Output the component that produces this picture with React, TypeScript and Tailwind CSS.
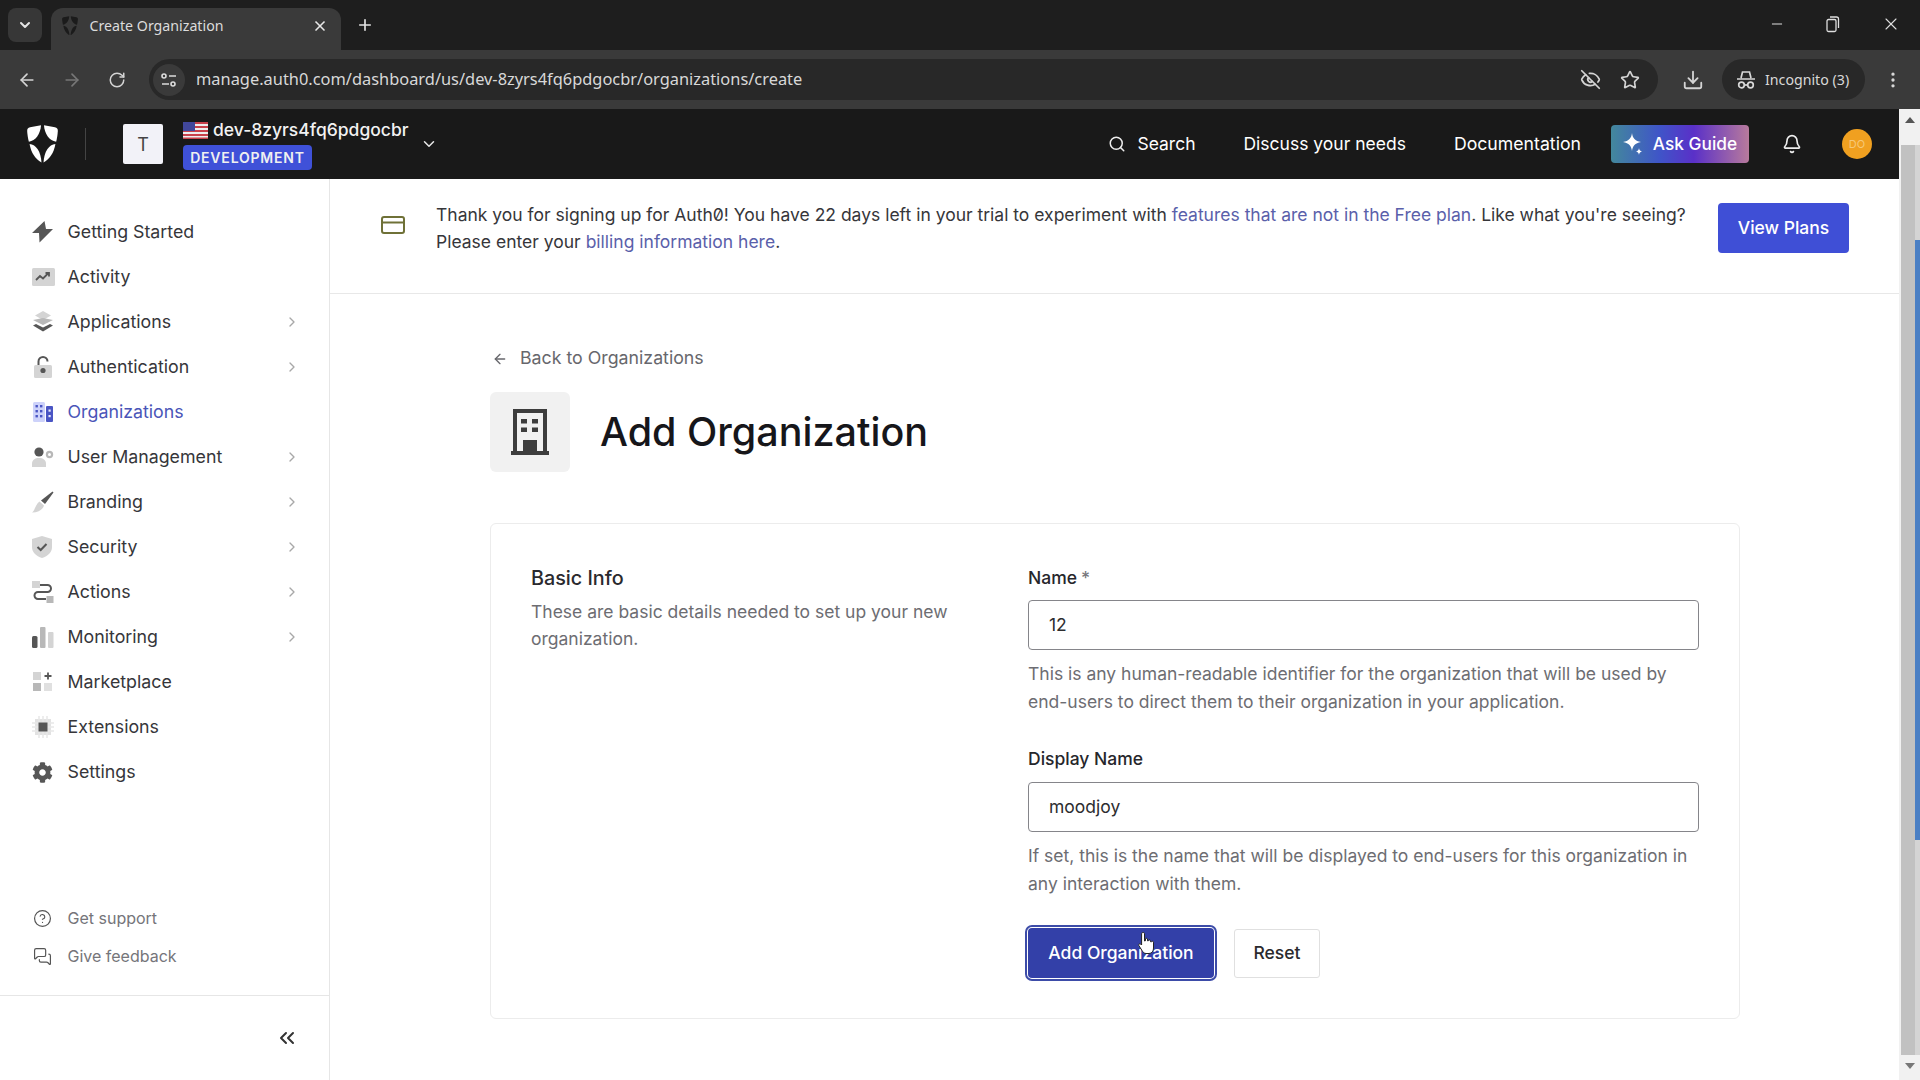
import { ArrowLeft, ArrowRight, RotateCw, Star, EyeOff, Download, MoreVertical, Minus, X, Plus, ChevronDown, ChevronRight, ChevronsLeft, Search, Bell, HelpCircle, MessagesSquare } from "lucide-react";
import { FaCog } from "react-icons/fa";

const D = "#565656";
const L = "#d4d4d4";
const M = "#b8b8b8";

function Bolt() {
  return <svg width="22" height="22" viewBox="0 0 22 22"><polygon points="12.5,0 0,12 7,12 7.5,21.5 21,8 14,8" fill={D} /></svg>;
}
function Activity() {
  return <svg width="23" height="20" viewBox="0 0 23 20"><rect x="0" y="1" width="23" height="18" rx="1.5" fill={L} /><path d="M4 13l4-4 3 2.5 5-5M13.5 6H17v3.5" stroke={D} strokeWidth="1.8" fill="none" /></svg>;
}
function Layers() {
  return <svg width="22" height="22" viewBox="0 0 22 22"><path d="M11 0l8 4.5-8 4.5-8-4.5z" fill={L} /><path d="M1 9l10-2 10 2-10 5z" fill={M} /><path d="M1 14.5l3-1.5 7 3.5 7-3.5 3 1.5-10 6z" fill={D} /></svg>;
}
function Lock() {
  return <svg width="22" height="22" viewBox="0 0 22 22"><rect x="2" y="9" width="18" height="13" rx="1.5" fill={L} /><path d="M6.5 9V5.5a4.5 4.5 0 0 1 9 0" stroke={D} strokeWidth="2" fill="none" /><circle cx="11" cy="14.5" r="2.6" fill={D} /></svg>;
}
function Org() {
  return <svg width="22" height="22" viewBox="0 0 22 22"><rect x="1" y="1" width="12" height="20" rx="1.5" fill="#cdd2fa" /><rect x="14" y="5" width="7" height="16" rx="1" fill="#4a55c4" /><g fill="#4a55c4"><rect x="3.5" y="4" width="2.4" height="2.4" /><rect x="8" y="4" width="2.4" height="2.4" /><rect x="3.5" y="9" width="2.4" height="2.4" /><rect x="8" y="9" width="2.4" height="2.4" /><rect x="3.5" y="14" width="2.4" height="2.4" /><rect x="8" y="14" width="2.4" height="2.4" /></g><g fill="#e8eafc"><rect x="16.5" y="8.5" width="2.2" height="2.2" /><rect x="16.5" y="14" width="2.2" height="2.2" /></g></svg>;
}
function Users() {
  return <svg width="22" height="20" viewBox="0 0 22 20"><circle cx="7" cy="5" r="4.6" fill={D} /><path d="M0 20v-3.5C0 13 3 11 7 11s7 2 7 5.500V20z" fill={L} /><circle cx="17.500" cy="7.500" r="2.600" fill="none" stroke={M} strokeWidth="2.200" /></svg>;
}
function Brush() {
  return <svg width="22" height="22" viewBox="0 0 22 22"><path d="M20.500 0.500L21.500 1.500 13 13 9 9.500z" fill={D} /><path d="M7.500 10.500L12 14.500C11 18 7 21.500 0 21.500 3 19.500 3.500 13 7.500 10.500z" fill={L} /></svg>;
}
function Shield() {
  return <svg width="20" height="22" viewBox="0 0 20 22"><path d="M10 0l10 3v8c0 5.500-4 9-10 11C4 20 0 16.500 0 11V3z" fill={L} /><path d="M5.500 11l3.200 3 5.800-6" stroke={D} strokeWidth="2" fill="none" /></svg>;
}
function ActionsIcon() {
  return <svg width="22" height="22" viewBox="0 0 22 22"><rect x="0" y="0" width="8" height="7" fill={L} /><rect x="14.500" y="15" width="7" height="7" fill={M} /><path d="M8 4h7.500a3.500 3.500 0 0 1 0 7h-9.500a3.500 3.500 0 0 0 0 7h8" stroke={D} strokeWidth="2" fill="none" /></svg>;
}
function Bars() {
  return <svg width="22" height="22" viewBox="0 0 22 22"><rect x="0" y="10" width="5.500" height="12" rx="1.500" fill={D} /><rect x="8" y="1" width="5.500" height="21" rx="1" fill={M} /><rect x="16" y="6" width="5.500" height="16" rx="1" fill={L} /></svg>;
}
function Market() {
  return <svg width="22" height="22" viewBox="0 0 22 22"><rect x="1" y="1" width="8" height="8" fill={L} /><rect x="1" y="12" width="8" height="8" fill={M} /><rect x="12" y="12" width="8" height="8" fill="#e0e0e0" /><path d="M16 1.500v7M12.500 5h7" stroke={D} strokeWidth="1.800" /></svg>;
}
function Chip() {
  return <svg width="22" height="22" viewBox="0 0 22 22"><rect x="3" y="3" width="16" height="16" fill="#e2e2e2" /><path d="M7 0v22M11 0v22M15 0v22M0 7h22M0 11h22M0 15h22" stroke="#e8e8e8" strokeWidth="1.500" /><rect x="6.500" y="6.500" width="9" height="9" fill={D} /></svg>;
}
function Cog() {
  return <FaCog size={21} color={D} />;
}

const nav = [
  { label: "Getting Started", Icon: Bolt, more: false },
  { label: "Activity", Icon: Activity, more: false },
  { label: "Applications", Icon: Layers, more: true },
  { label: "Authentication", Icon: Lock, more: true },
  { label: "Organizations", Icon: Org, more: false, active: true },
  { label: "User Management", Icon: Users, more: true },
  { label: "Branding", Icon: Brush, more: true },
  { label: "Security", Icon: Shield, more: true },
  { label: "Actions", Icon: ActionsIcon, more: true },
  { label: "Monitoring", Icon: Bars, more: true },
  { label: "Marketplace", Icon: Market, more: false },
  { label: "Extensions", Icon: Chip, more: false },
  { label: "Settings", Icon: Cog, more: false },
];

function Auth0Logo({ size, color }: { size: number; color: string }) {
  return (
    <svg width={size} height={size * 1.22} viewBox="0 0 31 38" fill={color}>
      <path d="M14 0.300L3 2.300C1 2.800 0 4 0.100 6 0.300 9.500 0.800 13 1.800 16.800 8.500 16 13.500 9 14 0.300z" />
      <path d="M17 0.300L28 2.300C30 2.800 31 4 30.900 6 30.700 9.500 30.200 13 29.200 16.800 22.500 16 17.500 9 17 0.300z" />
      <path d="M2.500 19C9 19.800 13.800 26 14.500 37.700 8 34 4 27.500 2.500 19z" />
      <path d="M28.500 19C22 19.800 17.200 26 16.500 37.700 23 34 27 27.500 28.500 19z" />
    </svg>
  );
}

function Flag() {
  return (
    <svg width="25" height="17" viewBox="0 0 25 17" className="shrink-0">
      <rect width="25" height="17" fill="#eee" />
      <g fill="#c8414b">
        <rect y="0" width="25" height="2" />
        <rect y="4" width="25" height="2" />
        <rect y="8" width="25" height="2" />
        <rect y="12" width="25" height="2" />
        <rect y="15.500" width="25" height="1.500" />
      </g>
      <rect width="12" height="9" fill="#41479b" />
    </svg>
  );
}

function Help({ children }: { children: React.ReactNode }) {
  return <p className="mt-[10px] text-[17.5px] leading-[27.5px] text-[#6d6d72]">{children}</p>;
}

function Field({ label, req, value, gap }: { label: string; req?: boolean; value: string; gap: string }) {
  return (
    <div className="flex flex-col">
      <div className="text-[17.5px] leading-[27px] font-medium text-[#26262b]">
        {label}
        {req && <span className="ml-[4px] text-[#77777c]">*</span>}
      </div>
      <div className={gap + " flex h-[50px] items-center rounded-[4px] border border-[#85858a] bg-white pl-[20px] text-[17.5px] text-[#2d2d30]"}>
        {value}
      </div>
    </div>
  );
}

export default function App() {
  return (
    <div className="relative flex h-[1080px] w-[1920px] flex-col overflow-hidden bg-white font-[Inter,sans-serif]">
      {/* browser tab strip */}
      <div className="flex h-[50px] shrink-0 items-end bg-[#1e1e1e] font-['Noto_Sans',sans-serif]">
        <div className="mb-[8px] ml-[8px] flex h-[34px] w-[34px] items-center justify-center rounded-[8px] bg-[#373737] text-[#e4e4e4]">
          <ChevronDown size={16} strokeWidth={3} />
        </div>
        <div className="ml-[9px] flex h-[42px] w-[290px] items-center rounded-t-[12px] bg-[#3a3a3a] pb-[7px] pl-[11px] pr-[13px]">
          <Auth0Logo size={16} color="#1b1b1b" />
          <span className="ml-[11.5px] flex-1 text-[14.2px] text-[#dcdcdc]">Create Organization</span>
          <X size={16} strokeWidth={2.500} className="text-[#e8e8e8]" />
        </div>
        <div className="mb-[16px] ml-[15px] text-[#e4e4e4]">
          <Plus size={18} strokeWidth={2.200} />
        </div>
        <div className="flex-1" />
        <div className="mb-[16px] flex items-center gap-[40px] pr-[19px] text-[#dedede]">
          <Minus size={16} strokeWidth={1.500} />
          <svg width="16" height="18" viewBox="0 0 16 18" fill="none" stroke="currentColor" strokeWidth="1.300"><rect x="2" y="4.500" width="9" height="12" rx="1.500" /><path d="M5 2h6.500A2 2 0 0 1 13.500 4v9" /></svg>
          <X size={20} strokeWidth={1.300} />
        </div>
      </div>
      {/* browser toolbar */}
      <div className="flex h-[59px] shrink-0 items-center bg-[#3a3a3a] font-['Noto_Sans',sans-serif]">
        <div className="flex items-center gap-[25px] pl-[17px] text-[#d4d4d4]">
          <ArrowLeft size={20} />
          <ArrowRight size={20} className="text-[#777]" />
          <RotateCw size={18} className="ml-[1px]" />
        </div>
        <div className="ml-[23px] flex h-[41px] w-[1509px] items-center rounded-full bg-[#282828]">
          <div className="ml-[4px] flex h-[32px] w-[32px] items-center justify-center rounded-full bg-[#3a3a3a]">
            <svg width="18" height="16" viewBox="0 0 18 16" fill="none" stroke="#dcdcdc" strokeWidth="1.600"><circle cx="4" cy="4" r="2" /><path d="M9 4h7M2 12h7" /><circle cx="13" cy="12" r="2" /></svg>
          </div>
          <span className="ml-[11px] flex-1 text-[16.4px] text-[#d8d8d8]">manage.auth0.com/dashboard/us/dev-8zyrs4fq6pdgocbr/organizations/create</span>
          <EyeOff size={21} className="mr-[19px] text-[#d4d4d4]" />
          <Star size={20} className="mr-[18px] text-[#d4d4d4]" />
        </div>
        <Download size={22} className="ml-[24px] text-[#d4d4d4]" />
        <div className="ml-[18px] flex h-[41px] w-[143px] items-center rounded-full bg-[#282828] pl-[14px] text-[#d8d8d8]">
          <svg width="20" height="20" viewBox="0 0 20 20" fill="none" stroke="currentColor" strokeWidth="1.700"><path d="M5 8l1.500-6h7L15 8M1 9h18" /><circle cx="5.500" cy="15" r="2.800" /><circle cx="14.500" cy="15" r="2.800" /><path d="M8.300 15h3.400" /></svg>
          <span className="ml-[9px] text-[14.2px]">Incognito (3)</span>
        </div>
        <MoreVertical size={20} className="ml-[18px] text-[#d8d8d8]" />
      </div>

      <div className="flex min-h-0 flex-1">
        <div className="flex w-[1899px] flex-col">
          {/* app header */}
          <header className="flex h-[70px] shrink-0 items-center bg-[#191919] text-white">
            <div className="ml-[27px]"><Auth0Logo size={31} color="#ffffff" /></div>
            <div className="ml-[27px] h-[32px] w-px bg-[#444]" />
            <div className="ml-[37px] flex h-[40px] w-[40px] items-center justify-center rounded-[2px] bg-[#f2f2f8] text-[18px] text-[#444]">T</div>
            <div className="ml-[20px] flex flex-col">
              <div className="flex items-center gap-[5px]">
                <Flag />
                <span className="text-[17.5px] leading-[24px] font-medium text-[#f2f2f2]">dev-8zyrs4fq6pdgocbr</span>
              </div>
              <div className="mt-[3px] flex h-[25px] w-[129px] items-center justify-center rounded-[4px] bg-[#3f51d8] text-[14px] font-semibold tracking-[0.8px] text-[#f0f0f0]">DEVELOPMENT</div>
            </div>
            <ChevronDown size={18} className="ml-[11px] text-[#e8e8e8]" />
            <div className="flex-1" />
            <Search size={18} className="text-[#eee]" />
            <span className="ml-[11px] text-[17.5px]">Search</span>
            <span className="ml-[48px] text-[17.5px]">Discuss your needs</span>
            <span className="ml-[48px] text-[17.7px]">Documentation</span>
            <div className="ml-[30px] flex h-[38px] w-[138px] items-center justify-center gap-[10px] rounded-[4px] bg-[linear-gradient(90deg,#43889c_0%,#3f55c8_35%,#5a30c8_60%,#b87a9c_100%)]">
              <svg width="20" height="24" viewBox="0 0 20 24" fill="white"><path d="M9 1c.6 5 3 8 9 9-6 1-8.400 4-9 9-.6-5-3-8-9-9 6-1 8.400-4 9-9z" /><path d="M16 16c.2 2 1 3 3 3.500-2 .5-2.800 1.500-3 3.500-.2-2-1-3-3-3.500 2-.5 2.800-1.500 3-3.500z" /></svg>
              <span className="text-[17.3px] font-medium">Ask Guide</span>
            </div>
            <Bell size={20} className="ml-[33px] text-[#eee]" />
            <div className="ml-[40px] mr-[27px] flex h-[30px] w-[30px] items-center justify-center rounded-full bg-[#f0a020] text-[11px] text-[#f6c878]">DO</div>
          </header>

          <div className="flex min-h-0 flex-1">
            {/* sidebar */}
            <aside className="flex w-[330px] shrink-0 flex-col border-r border-[#e6e6e6]">
              <nav className="flex flex-col pt-[30.5px]">
                {nav.map(({ label, Icon, more, active }) => (
                  <div key={label} className="flex h-[45px] items-center pl-[32px] pr-[29px]">
                    <div className="flex w-[35.5px] shrink-0 items-center">
                      <Icon />
                    </div>
                    <span className={"flex-1 text-[17.8px] " + (active ? "text-[#4a55b8]" : "text-[#36363a]")}>{label}</span>
                    {more && <ChevronRight size={16} className="text-[#a8a8a8]" />}
                  </div>
                ))}
              </nav>
              <div className="flex-1" />
              <div className="flex h-[38px] items-center pl-[33px] text-[16px] text-[#75757a]">
                <HelpCircle size={19} strokeWidth={1.500} className="text-[#555]" />
                <span className="ml-[15.5px]">Get support</span>
              </div>
              <div className="flex h-[38px] items-center pl-[33px] text-[16px] text-[#75757a]">
                <MessagesSquare size={19} strokeWidth={1.500} className="text-[#555]" />
                <span className="ml-[15.5px]">Give feedback</span>
              </div>
              <div className="mt-[20px] flex h-[85px] items-center justify-end border-t border-[#e6e6e6] pr-[30px] text-[#333]">
                <ChevronsLeft size={24} />
              </div>
            </aside>

            {/* main */}
            <main className="flex min-w-0 flex-1 flex-col">
              <div className="flex h-[115px] shrink-0 items-start border-b border-[#e8e8e8] pl-[51px] pr-[50px]">
                <svg width="24" height="18" viewBox="0 0 24 18" fill="none" stroke="#6f7137" strokeWidth="2" className="mt-[37px] shrink-0"><rect x="1" y="1" width="22" height="16" rx="2" /><path d="M1 6.500h22" /></svg>
                <p className="ml-[31px] mt-[22px] w-[1265px] text-[17.5px] leading-[27px] text-[#36363a]">
                  Thank you for signing up for <span className="slashed-zero">Auth0</span>! You have 22 days left in your trial to experiment with <span className="text-[#5a60aa]">features that are not in the Free plan</span>. Like what you're seeing? Please enter your <span className="text-[#5a60aa]">billing information here</span>.
                </p>
                <div className="flex-1" />
                <div className="mt-[24px] flex h-[50px] w-[131px] shrink-0 items-center justify-center rounded-[4px] bg-[#3f4fd6] text-[17.5px] font-medium text-white">View Plans</div>
              </div>

              <div className="flex flex-col pl-[160px] pt-[51px]">
                <div className="flex h-[27px] items-center pl-[2px] text-[17.75px] text-[#67676c]">
                  <ArrowLeft size={16} />
                  <span className="ml-[12px]">Back to Organizations</span>
                </div>
                <div className="mt-[20px] flex items-center">
                  <div className="flex h-[80px] w-[80px] items-center justify-center rounded-[6px] bg-[#f1f1f1]">
                    <svg width="38" height="46" viewBox="0 0 38 46" fill="#3d3d3d">
                      <path fillRule="evenodd" d="M2 0h34v42h2v4H0v-4h2zM6 4v38h6V31h14v11h6V4z" />
                      <path d="M10 10h6v4.500h-6zM21 10h6v4.500h-6zM10 18.500h6V23h-6zM21 18.500h6V23h-6zM15 34h2v8h-2zM21 34h2v8h-2z" />
                    </svg>
                  </div>
                  <h1 className="ml-[30px] pt-[2px] text-[39.5px] font-medium text-[#16161a]">Add Organization</h1>
                </div>

                <section className="mt-[51px] flex w-[1250px] rounded-[6px] border border-[#ececec] px-[40px] pb-[40px] pt-[40px]">
                  <div className="w-[497px] shrink-0">
                    <h2 className="text-[19.75px] leading-[28px] font-medium text-[#2a2a2e]">Basic Info</h2>
                    <p className="mt-[6px] w-[430px] text-[17.5px] leading-[27px] text-[#6d6d72]">These are basic details needed to set up your new organization.</p>
                  </div>
                  <div className="min-w-0 flex-1">
                    <Field label="Name" req value="12" gap="mt-[9px]" />
                    <Help>This is any human-readable identifier for the organization that will be used by end-users to direct them to their organization in your application.</Help>
                    <div className="mt-[30px]">
                      <Field label="Display Name" value="moodjoy" gap="mt-[10px]" />
                    </div>
                    <Help>If set, this is the name that will be displayed to end-users for this organization in any interaction with them.</Help>
                    <div className="mt-[31px] flex items-center">
                      <div className="flex h-[50px] w-[186px] items-center justify-center rounded-[4px] bg-[#3340a8] text-[17.5px] font-medium text-white outline-2 outline-offset-1 outline-[#3d4ca8]">Add Organization</div>
                      <div className="ml-[20px] flex h-[49px] w-[86px] items-center justify-center rounded-[3px] border border-[#e0e0e0] text-[17.5px] font-medium text-[#2a2a2e]">Reset</div>
                    </div>
                  </div>
                </section>
              </div>
            </main>
          </div>
        </div>

        {/* page scrollbar */}
        <div className="flex w-[21px] shrink-0 flex-col bg-[#f1f1f1]">
          <div className="flex h-[36px] shrink-0 justify-center pt-[8px]">
            <svg width="10" height="6" viewBox="0 0 10 6" fill="#555"><path d="M5 0l5 6H0z" /></svg>
          </div>
          <div className="flex h-[910px] shrink-0 pl-[2px]">
            <div className="w-[14px] bg-[#c1c1c1]" />
            <div className="w-[5px] bg-[#d4d4d4]">
              <div className="mt-[95px] h-[600px] bg-[#4a7fc4]" />
            </div>
          </div>
          <div className="flex flex-1 justify-center pt-[8px]">
            <svg width="10" height="6" viewBox="0 0 10 6" fill="#777"><path d="M5 6l5-6H0z" /></svg>
          </div>
        </div>
      </div>

      {/* mouse pointer */}
      <svg width="18" height="23" viewBox="0 0 18 23" className="absolute left-[1138px] top-[931px]">
        <path d="M5 1.500c1 0 1.500.6 1.500 1.500v7l1-.3V8c0-1 1.800-1 2 0v1.800l1-.1c0-1 1.800-1 2 0v1l1 0c.5-.8 2-.5 2 .5V17c0 3-1.500 5.500-4.500 5.500H8c-2 0-3-1.500-4-3L.8 14.500c-.5-1 .5-2.200 1.800-1.500l1 1V3c0-1 .5-1.500 1.400-1.500z" fill="white" stroke="#222" strokeWidth="1" />
      </svg>
    </div>
  );
}
